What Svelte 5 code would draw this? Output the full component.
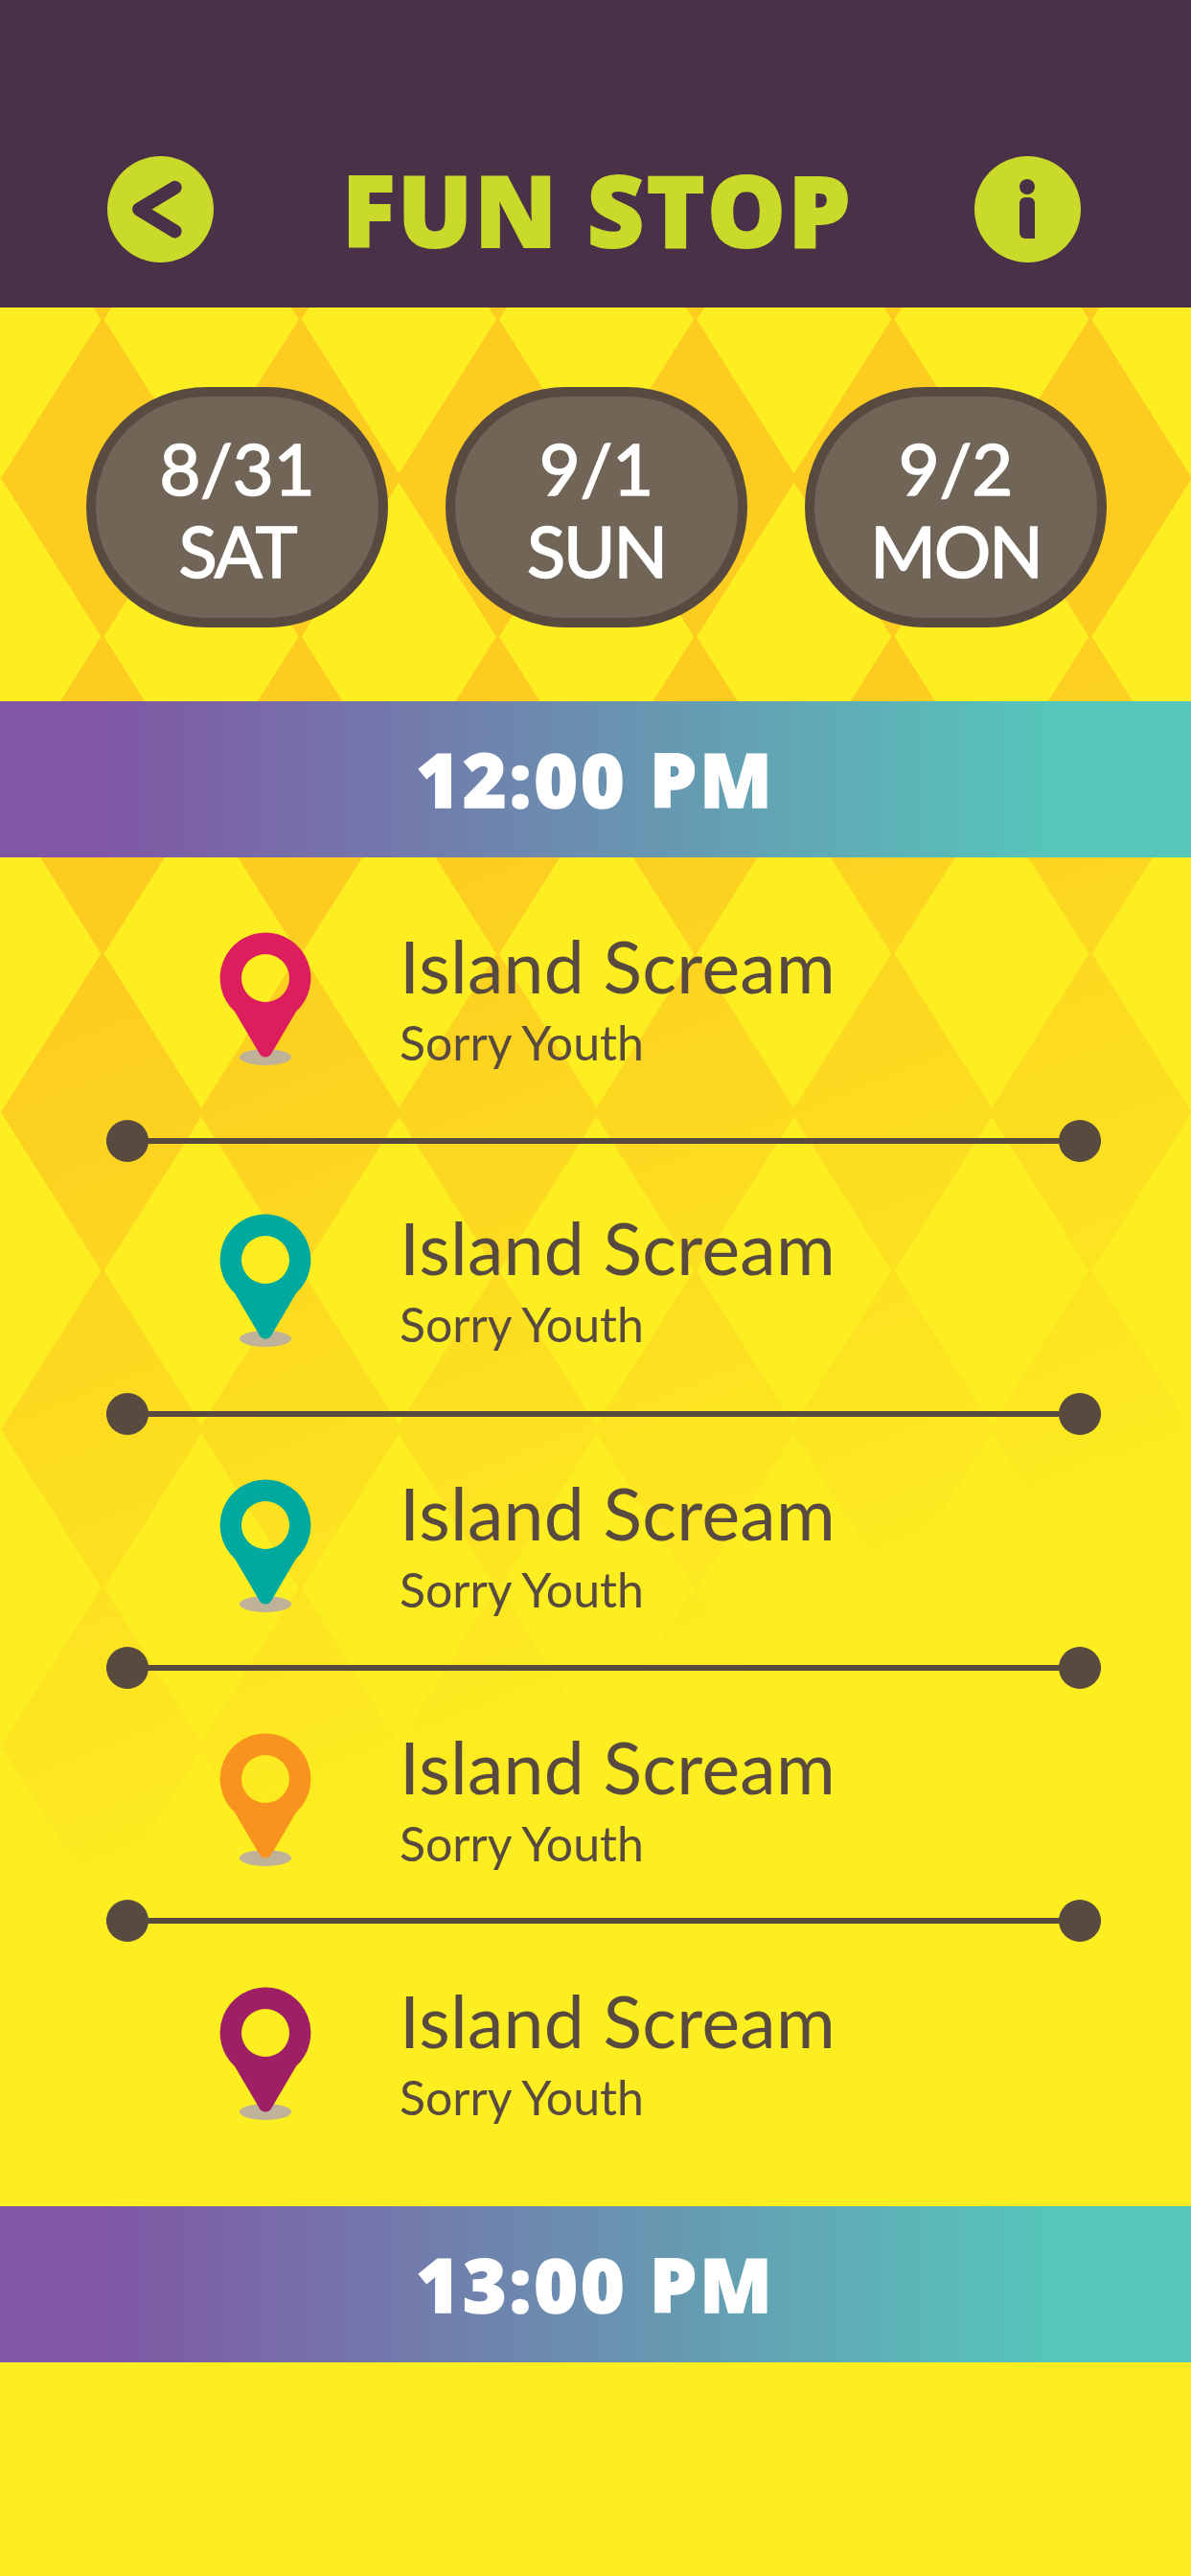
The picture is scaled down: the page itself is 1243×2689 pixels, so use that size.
<script>
	const days = [
		{ date: '8/31', name: 'SAT' },
		{ date: '9/1', name: 'SUN' },
		{ date: '9/2', name: 'MON' }
	];

	// height = pin top to the divider under it, the rows are not evenly spaced
	const stops = [
		{ color: '#dc1e5f', height: 218, top: 78 },
		{ color: '#00a99d', height: 209, top: 76 },
		{ color: '#00a99d', height: 197, top: 68 },
		{ color: '#f7931e', height: 196, top: 68 },
		{ color: '#9e1f63', height: 0, top: 69 }
	];

	const pin = 'M48 .5A47.5 47.5 0 0 1 80 83L53.800 127.500A7 7 0 0 1 42.200 127.500L16 83A47.5 47.5 0 0 1 48 .5ZM48 23A25 25 0 1 0 48 73A25 25 0 1 0 48 23Z';

	// background diamonds
	const diamonds = [];
	for (let row = 0; row < 7; row++) {
		for (let col = 0; col < 6; col++) {
			const x = 107 + col * 206.2;
			const y = 168 + row * 331;
			diamonds.push(`${x},${y - 168} ${x + 106},${y} ${x},${y + 168} ${x - 106},${y}`);
		}
	}
</script>

<div class="page">
	<svg class="pattern" width="1243" height="2689" aria-hidden="true">
		<defs>
			<linearGradient id="fade" gradientUnits="userSpaceOnUse" x1="370" y1="930" x2="721" y2="1813">
				<stop offset="0" stop-color="#fccd20" />
				<stop offset="1" stop-color="#fdee21" />
			</linearGradient>
		</defs>
		{#each diamonds as points}
			<polygon {points} fill="url(#fade)" />
		{/each}
	</svg>

	<header>
		<button class="round" aria-label="Back">
			<svg width="111" height="111" viewBox="0 0 111 111">
				<path d="M70.700 32.700L33 55.500 70.700 78.400" fill="none" stroke="#4b3148" stroke-width="14" stroke-linecap="round" stroke-linejoin="round" />
			</svg>
		</button>
		<h1>FUN STOP</h1>
		<button class="round" aria-label="Info">
			<svg width="111" height="111" viewBox="0 0 111 111">
				<circle cx="55" cy="32" r="8" fill="#4b3148" />
				<path d="M47 49a6 6 0 0 1 6-6h4a6 6 0 0 1 6 6v37h-10a6 6 0 0 1-6-6Z" fill="#4b3148" />
			</svg>
		</button>
	</header>

	<div class="days">
		{#each days as day}
			<div class="day">
				<span>{day.date}</span>
				<span class="name">{day.name}</span>
			</div>
		{/each}
	</div>

	<div class="time first">12:00 PM</div>

	<div class="stops">
		{#each stops as stop}
			<div class="stop" style="margin-top: {stop.top}px; height: {stop.height}px">
				<div class="row">
					<svg class="pin" width="96" height="140" viewBox="0 0 96 140">
						<ellipse cx="48" cy="130.500" rx="27" ry="8.500" fill="#bfb299" />
						<path d={pin} fill={stop.color} fill-rule="evenodd" />
					</svg>
					<div class="text">
						<div class="title">Island Scream</div>
						<div class="band">Sorry Youth</div>
					</div>
				</div>
			</div>
			{#if stop.height}
				<div class="divider"></div>
			{/if}
		{/each}
	</div>

	<div class="time second">13:00 PM</div>
</div>

<style>
	:global(body) {
		margin: 0;
		background: #fdee21;
	}

	.page {
		position: relative;
		width: 1243px;
		height: 2689px;
		overflow: hidden;
		font-family: 'Lato', sans-serif;
	}

	.pattern {
		position: absolute;
		top: 0;
		left: 0;
	}

	header {
		position: relative;
		height: 321px;
		box-sizing: border-box;
		padding: 163px 115px 0 112px;
		background: #4b3148;
		display: flex;
		justify-content: space-between;
		align-items: flex-start;
	}

	h1 {
		margin: 0;
		padding-left: 7px;
		font-family: 'Open Sans', sans-serif;
		font-size: 103px;
		line-height: 111px;
		font-weight: 800;
		letter-spacing: 2.400px;
		-webkit-text-stroke: 2px #c9da2a;
		color: #c9da2a;
	}

	.round {
		width: 111px;
		height: 111px;
		padding: 0;
		border: 0;
		border-radius: 50%;
		background: #c9da2a;
	}

	.round svg {
		display: block;
	}

	.days {
		position: relative;
		display: flex;
		gap: 60px;
		padding: 83px 88px 0 90px;
	}

	.day {
		width: 315px;
		height: 251px;
		box-sizing: border-box;
		padding-top: 4px;
		border: 10px solid #594a40;
		border-radius: 126px;
		background: #716557;
		color: #fff;
		font-size: 74px;
		line-height: 86px;
		-webkit-text-stroke: 1.600px #fff;
		display: flex;
		flex-direction: column;
		align-items: center;
		justify-content: center;
	}

	.name {
		letter-spacing: -2px;
	}

	.time {
		position: relative;
		height: 163px;
		background: linear-gradient(90deg, #8056a5 8%, #56c5ba 88%);
		color: #fff;
		font-family: 'Open Sans', sans-serif;
		font-size: 78px;
		font-weight: 800;
		letter-spacing: 3px;
		-webkit-text-stroke: 1.500px #fff;
		line-height: 163px;
		text-align: center;
	}

	.first {
		margin-top: 77px;
	}

	.stops {
		position: relative;
		display: flex;
		flex-direction: column;
		height: 1408px;
	}

	.stop {
		padding-left: 229px;
	}

	.row {
		display: flex;
		align-items: flex-start;
	}

	.pin {
		flex: none;
	}

	.text {
		margin-left: 92px;
		color: #594a40;
	}

	.title {
		font-size: 75px;
		line-height: 90px;
		letter-spacing: .3px;
		margin-top: -10px;
	}

	.band {
		font-size: 50px;
		line-height: 60px;
		margin-top: 5px;
	}

	.divider {
		position: relative;
		flex: none;
		height: 44px;
		margin: -22px 94px -22px 111px;
		background: linear-gradient(#594a40, #594a40) center / 100% 6px no-repeat;
	}

	.divider::before,
	.divider::after {
		content: '';
		position: absolute;
		top: 0;
		width: 44px;
		height: 44px;
		border-radius: 50%;
		background: #594a40;
	}

	.divider::before {
		left: 0;
	}

	.divider::after {
		right: 0;
	}
</style>
